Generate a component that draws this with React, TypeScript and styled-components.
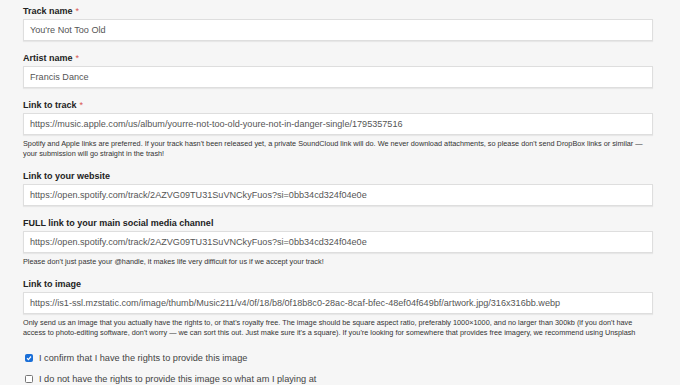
import { createGlobalStyle } from "styled-components";
import styled from "styled-components";

const pal = {
	bg: "#f6f6f6",
	label: "#222222",
	text: "#555555",
	help: "#333333",
	border: "#dedede",
	star: "#d9534f",
	check: "#1a6fd8",
};

const GlobalStyle = createGlobalStyle`
	html, body {
		margin: 0;
		padding: 0;
		background: ${pal.bg};
	}
	body {
		font-family: "Liberation Sans", Arial, sans-serif;
	}
`;

const Page = styled.div`
	width: 680px;
	height: 385px;
	overflow: hidden;
	background: ${pal.bg};
	padding: 5px 27px 0 23px;
	box-sizing: border-box;
`;

const Field = styled.div<{ $gap?: number }>`
	display: flex;
	flex-direction: column;
	margin-bottom: ${(p) => p.$gap ?? 11}px;
`;

const Label = styled.label`
	font-size: 9px;
	font-weight: bold;
	color: ${pal.label};
	line-height: 12px;
	margin-bottom: 2px;
`;

const Star = styled.span`
	color: ${pal.star};
	margin-left: 3px;
	font-weight: normal;
`;

const Input = styled.div`
	height: 22px;
	box-sizing: border-box;
	background: #fff;
	border: 1px solid ${pal.border};
	box-shadow: 0 1px 1px rgba(0, 0, 0, 0.06);
	padding: 0 6px;
	display: flex;
	align-items: center;
	font-size: 9.1px;
	color: ${pal.text};
	white-space: nowrap;
	overflow: hidden;
`;

const Help = styled.p`
	margin: 4px 0 0;
	font-size: 7.3px;
	line-height: 10px;
	color: ${pal.help};
`;

const CheckRow = styled.label`
	display: flex;
	align-items: center;
	gap: 6px;
	height: 21px;
	padding-left: 2px;
	font-size: 9.2px;
	color: #444;
`;

const Box = styled.span<{ $checked?: boolean }>`
	width: 8px;
	height: 8px;
	box-sizing: border-box;
	border-radius: 1.5px;
	border: 1px solid ${(p) => (p.$checked ? pal.check : "#767676")};
	background: ${(p) => (p.$checked ? pal.check : "#fff")};
	display: flex;
	align-items: center;
	justify-content: center;
`;

function Check({ checked, children }: { checked?: boolean; children: string }) {
	return (
		<CheckRow>
			<Box $checked={checked}>
				{checked && (
					<svg width="6" height="6" viewBox="0 0 6 6">
						<path d="M1 3.2 L2.4 4.6 L5 1.5" stroke="#fff" strokeWidth="1.2" fill="none" />
					</svg>
				)}
			</Box>
			{children}
		</CheckRow>
	);
}

export default function App() {
	return (
		<>
			<GlobalStyle />
			<Page>
				<Field>
					<Label>
						Track name<Star>*</Star>
					</Label>
					<Input>You're Not Too Old</Input>
				</Field>
				<Field>
					<Label>
						Artist name<Star>*</Star>
					</Label>
					<Input>Francis Dance</Input>
				</Field>
				<Field>
					<Label>
						Link to track<Star>*</Star>
					</Label>
					<Input>https://music.apple.com/us/album/yourre-not-too-old-youre-not-in-danger-single/1795357516</Input>
					<Help>
						Spotify and Apple links are preferred. If your track hasn't been released yet, a private SoundCloud link will do. We never download attachments, so please don't send DropBox links or similar — your submission will go straight in the trash!
					</Help>
				</Field>
				<Field>
					<Label>Link to your website</Label>
					<Input>https://open.spotify.com/track/2AZVG09TU31SuVNCkyFuos?si=0bb34cd324f04e0e</Input>
				</Field>
				<Field>
					<Label>FULL link to your main social media channel</Label>
					<Input>https://open.spotify.com/track/2AZVG09TU31SuVNCkyFuos?si=0bb34cd324f04e0e</Input>
					<Help>Please don't just paste your @handle, it makes life very difficult for us if we accept your track!</Help>
				</Field>
				<Field $gap={9}>
					<Label>Link to image</Label>
					<Input>https://is1-ssl.mzstatic.com/image/thumb/Music211/v4/0f/18/b8/0f18b8c0-28ac-8caf-bfec-48ef04f649bf/artwork.jpg/316x316bb.webp</Input>
					<Help>
						Only send us an image that you actually have the rights to, or that's royalty free. The image should be square aspect ratio, preferably 1000×1000, and no larger than 300kb (if you don't have access to photo-editing software, don't worry — we can sort this out. Just make sure it's a square). If you're looking for somewhere that provides free imagery, we recommend using Unsplash
					</Help>
				</Field>
				<Check checked>I confirm that I have the rights to provide this image</Check>
				<Check>I do not have the rights to provide this image so what am I playing at</Check>
			</Page>
		</>
	);
}
